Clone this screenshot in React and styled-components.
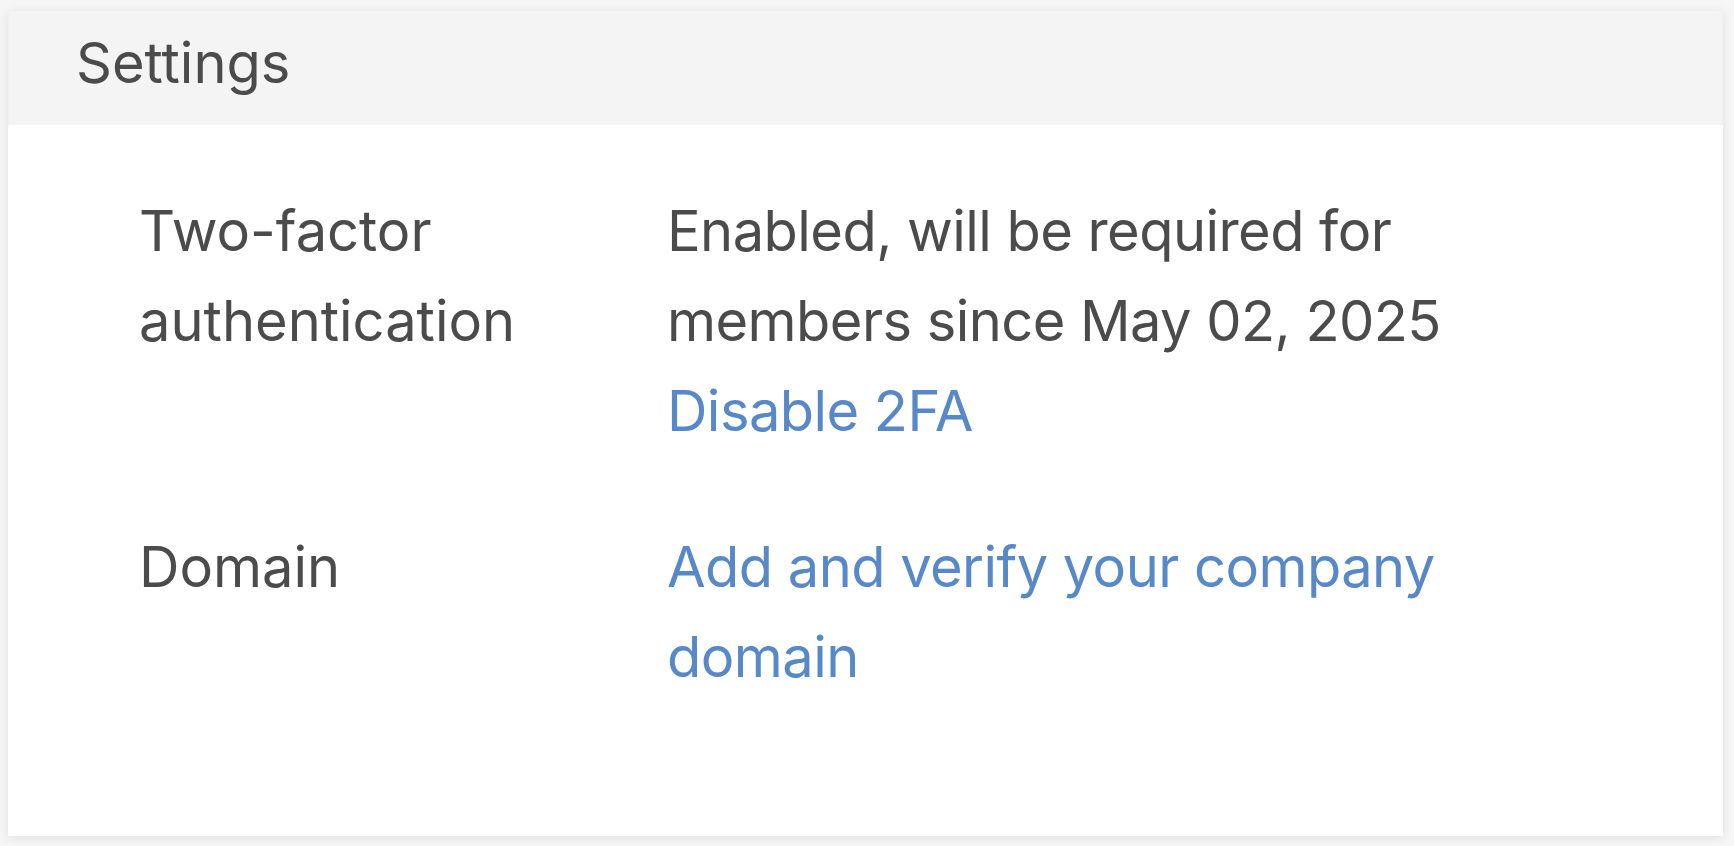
import React from 'react'
import styled, { createGlobalStyle } from 'styled-components'

const Global = createGlobalStyle`
    html, body, #root {
        height: 100%;
    }
    body {
        margin: 0;
        background: #f6f6f6;
        font-family: Inter, "Noto Sans", sans-serif;
    }
`

const Page = styled.div`
    box-sizing: border-box;
    height: 100%;
    padding: 10px 11px 10px 8px;
`

const Card = styled.section`
    height: 100%;
    background: #ffffff;
    box-shadow: 0 2px 10px rgba(0, 0, 0, 0.09);
    display: flex;
    flex-direction: column;
`

const Header = styled.header`
    box-sizing: border-box;
    height: 115px;
    padding: 0 0 10px 67px;
    background: #f4f4f4;
    border: 1px solid #f0f0f0;
    border-bottom: none;
    font-size: 56px;
    line-height: 104px;
    color: #4b4b4b;
`

const Body = styled.div`
    padding: 61px 0 0 131px;
    display: flex;
    flex-direction: column;
    gap: 66px;
`

const Row = styled.div`
    display: grid;
    grid-template-columns: 528px 820px;
    font-size: 56px;
    line-height: 90px;
    color: #4b4b4b;
`

const Label = styled.div``

const Value = styled.div`
    display: flex;
    flex-direction: column;
    letter-spacing: -0.55px;
`

const Link = styled.a`
    color: #5789c8;
    text-decoration: none;
    cursor: pointer;
`

export default function App() {
    return (
        <>
            <Global />
            <Page>
                <Card>
                    <Header>Settings</Header>
                    <Body>
                        <Row>
                            <Label>Two-factor<br />authentication</Label>
                            <Value>
                                <span>Enabled, will be required for members since May 02, 2025</span>
                                <Link>Disable 2FA</Link>
                            </Value>
                        </Row>
                        <Row>
                            <Label>Domain</Label>
                            <Value>
                                <Link>Add and verify your company domain</Link>
                            </Value>
                        </Row>
                    </Body>
                </Card>
            </Page>
        </>
    )
}
